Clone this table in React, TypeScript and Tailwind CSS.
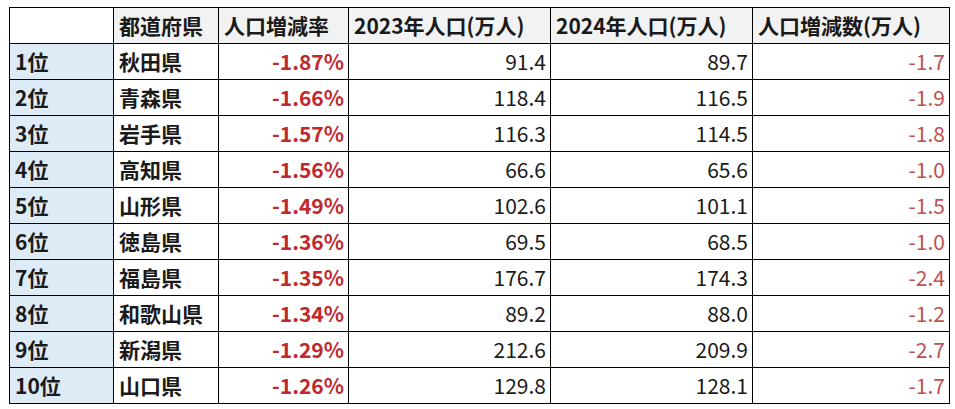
const rows = [
  { rank: '1位', pref: '秋田県', rate: '-1.87%', p2023: '91.4', p2024: '89.7', diff: '-1.7' },
  { rank: '2位', pref: '青森県', rate: '-1.66%', p2023: '118.4', p2024: '116.5', diff: '-1.9' },
  { rank: '3位', pref: '岩手県', rate: '-1.57%', p2023: '116.3', p2024: '114.5', diff: '-1.8' },
  { rank: '4位', pref: '高知県', rate: '-1.56%', p2023: '66.6', p2024: '65.6', diff: '-1.0' },
  { rank: '5位', pref: '山形県', rate: '-1.49%', p2023: '102.6', p2024: '101.1', diff: '-1.5' },
  { rank: '6位', pref: '徳島県', rate: '-1.36%', p2023: '69.5', p2024: '68.5', diff: '-1.0' },
  { rank: '7位', pref: '福島県', rate: '-1.35%', p2023: '176.7', p2024: '174.3', diff: '-2.4' },
  { rank: '8位', pref: '和歌山県', rate: '-1.34%', p2023: '89.2', p2024: '88.0', diff: '-1.2' },
  { rank: '9位', pref: '新潟県', rate: '-1.29%', p2023: '212.6', p2024: '209.9', diff: '-2.7' },
  { rank: '10位', pref: '山口県', rate: '-1.26%', p2023: '129.8', p2024: '128.1', diff: '-1.7' },
]

const headers = ['都道府県', '人口増減率', '2023年人口(万人)', '2024年人口(万人)', '人口増減数(万人)']

export default function App() {
  return (
    <div className="min-h-screen bg-white pl-[9px] pt-[7px] font-['Noto_Sans_CJK_JP',sans-serif] text-[21px] text-[#1a1a1a]">
      <table className="w-[940px] table-fixed border-collapse">
        <colgroup>
          <col className="w-[104px]" />
          <col className="w-[105px]" />
          <col className="w-[130px]" />
          <col className="w-[202px]" />
          <col className="w-[202px]" />
          <col className="w-[197px]" />
        </colgroup>
        <thead>
          <tr className="h-[36px]">
            <th className="border border-black bg-white" />
            {headers.map((h) => (
              <th
                key={h}
                className="whitespace-nowrap border border-black bg-[#f2f2f2] px-[5px] text-left font-bold leading-none"
              >
                {h}
              </th>
            ))}
          </tr>
        </thead>
        <tbody>
          {rows.map((r) => (
            <tr key={r.rank} className="h-[36px]">
              <td className="border border-black bg-[#ddebf7] px-[5px] font-bold leading-none">{r.rank}</td>
              <td className="border border-black px-[5px] font-bold leading-none">{r.pref}</td>
              <td className="border border-black px-[4px] text-right font-bold leading-none text-[#c0282d]">
                {r.rate}
              </td>
              <td className="border border-black px-[4px] text-right leading-none">{r.p2023}</td>
              <td className="border border-black px-[4px] text-right leading-none">{r.p2024}</td>
              <td className="border border-black px-[4px] text-right leading-none text-[#c0504d]">{r.diff}</td>
            </tr>
          ))}
        </tbody>
      </table>
    </div>
  )
}
